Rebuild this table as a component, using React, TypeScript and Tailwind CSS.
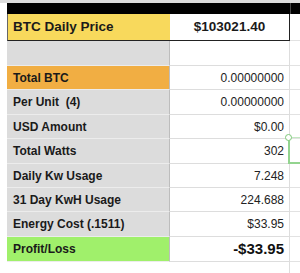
const rows = [
  { label: 'Total BTC', value: '0.00000000', bg: 'bg-[#f1ae43]', h: 'h-[24px]' },
  { label: 'Per Unit  (4)', value: '0.00000000', bg: 'bg-[#dcdcdc]', h: 'h-[25px]' },
  { label: 'USD Amount', value: '$0.00', bg: 'bg-[#dcdcdc]', h: 'h-[24px]' },
  { label: 'Total Watts', value: '302', bg: 'bg-[#dcdcdc]', h: 'h-[25px]' },
  { label: 'Daily Kw Usage', value: '7.248', bg: 'bg-[#dcdcdc]', h: 'h-[24px]' },
  { label: '31 Day KwH Usage', value: '224.688', bg: 'bg-[#dcdcdc]', h: 'h-[24px]' },
  { label: 'Energy Cost (.1511)', value: '$33.95', bg: 'bg-[#dcdcdc]', h: 'h-[25px]' },
]

function Row({ label, value, bg, h }: { label: string; value: string; bg: string; h: string }) {
  return (
    <div className={`flex ${h}`}>
      <div className="w-[7px] bg-white" />
      <div
        className={`flex w-[163px] items-center border-b border-r border-b-[#ececec] border-r-[#bdbdbd] pl-[6px] text-[12px] font-bold text-[#1a1a1a] ${bg}`}
      >
        <span className="whitespace-pre">{label}</span>
      </div>
      <div className="flex w-[120px] items-center justify-end border-b border-r border-[#dddddd] pr-[5px] text-[12px] text-[#222]">
        {value}
      </div>
      <div className="flex-1 border-b border-[#e2e2e2] bg-white" />
    </div>
  )
}

export default function App() {
  return (
    <div
      className="relative h-[273px] w-[300px] overflow-hidden bg-white"
      style={{ fontFamily: '"Liberation Sans", Arial, sans-serif' }}
    >
      <div className="h-[3px] bg-[#dcdcdc]" />

      <div className="flex h-[11px]">
        <div className="w-[7px] bg-white" />
        <div className="w-[283px] bg-black" />
        <div className="flex-1 border-l border-[#444] bg-black" />
      </div>

      <div className="flex h-[27px]">
        <div className="w-[7px] bg-white" />
        <div className="flex w-[163px] items-center border-b border-l border-b-[#222] border-l-[#666] bg-[#f8d95c] pl-[5px] text-[13.5px] font-bold text-[#1a1a1a]">
          BTC Daily Price
        </div>
        <div className="flex w-[120px] items-center justify-center border-b border-r border-[#222] bg-white text-[13.5px] font-bold text-[#1a1a1a]">
          $103021.40
        </div>
        <div className="flex-1 border-b border-[#e2e2e2] bg-white" />
      </div>

      <div className="flex h-[25px]">
        <div className="w-[7px] bg-white" />
        <div className="w-[163px] border-b border-r border-b-[#ececec] border-r-[#bdbdbd] bg-[#dcdcdc]" />
        <div className="w-[120px] border-b border-r border-[#dddddd]" />
        <div className="flex-1 border-b border-[#e2e2e2]" />
      </div>

      {rows.map((r) => (
        <Row key={r.label} {...r} />
      ))}

      <div className="flex h-[25px]">
        <div className="w-[7px] bg-white" />
        <div className="flex w-[163px] items-center border-b border-r border-b-[#ececec] border-r-[#bdbdbd] bg-[#a0f06b] pl-[6px] text-[12px] font-bold text-[#1a1a1a]">
          Profit/Loss
        </div>
        <div className="flex w-[120px] items-center justify-end border-b border-r border-[#dddddd] pr-[5px] text-[15px] font-bold text-[#111]">
          -$33.95
        </div>
        <div className="flex-1 border-b border-[#e2e2e2]" />
      </div>

      <div className="flex h-[11px]">
        <div className="w-[170px]" />
        <div className="w-[120px] border-r border-[#dddddd]" />
      </div>

      <div className="absolute left-[288px] top-[137px] h-[27px] w-[20px] border-b-2 border-l-2 border-t border-b-[#93d48f] border-l-[#93d48f] border-t-[#c4e8c2]" />
      <div className="absolute left-[285px] top-[134px] h-[7px] w-[7px] rounded-full border border-[#7cc878] bg-white" />
    </div>
  )
}
